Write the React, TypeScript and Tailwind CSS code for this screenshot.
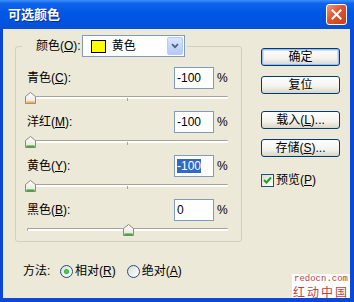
import React from "react";

const font = "font-['Liberation_Sans','Noto_Sans_CJK_SC',sans-serif]";

function Thumb({ tone = "green" }: { tone?: "green" | "orange" }) {
  const edge = tone === "green" ? "#21a121" : "#f4a63b";
  return (
    <svg width="11" height="12" viewBox="0 0 11 12">
      <defs>
        <linearGradient id={`tg-${tone}`} x1="0" y1="0" x2="0" y2="1">
          <stop offset="0" stopColor="#ffffff" />
          <stop offset="1" stopColor="#e6e4da" />
        </linearGradient>
      </defs>
      <path d="M0.5 4.5 L5.5 0.5 L10.5 4.5 V11.5 H0.5 Z" fill={`url(#tg-${tone})`} stroke="#8c8b80" />
      <path d="M1.5 10 H9.5 M1.5 10.8 H9.5" stroke={edge} strokeWidth="1" />
    </svg>
  );
}

function Slider({ value, tone }: { value: number; tone?: "green" | "orange" }) {
  const left = -2 + ((value + 100) / 200) * 196;
  return (
    <div className="relative h-[16px]">
      <div className="absolute left-0 right-0 top-[7px] h-[3px] rounded-[1px] border-t border-l border-[#a5a497] bg-white" />
      <div className="absolute left-[100px] top-[9px] h-[3px] w-px bg-[#a5a497]" />
      <div className="absolute top-[3px]" style={{ left }}>
        <Thumb tone={tone} />
      </div>
    </div>
  );
}

function Row({
  name,
  hot,
  value,
  selected,
}: {
  name: string;
  hot: string;
  value: string;
  selected?: boolean;
}) {
  return (
    <div className="flex h-[22px] items-center">
      <span className="leading-[14px]">
        {name}(<span className="underline">{hot}</span>):
      </span>
      <div className="ml-auto flex h-[22px] w-[40px] items-center border border-[#7f9db9] bg-white pl-[2px]">
        <span className={selected ? "bg-[#316ac5] leading-[14px] text-white" : "leading-[14px]"}>{value}</span>
      </div>
      <span className="ml-[3px] w-[11px] leading-[14px]">%</span>
    </div>
  );
}

function XpButton({ children, primary }: { children: React.ReactNode; primary?: boolean }) {
  return (
    <div
      className={`flex h-[18px] w-[79px] items-center justify-center rounded-[3px] border border-[#003c74] bg-[linear-gradient(180deg,#ffffff_0%,#f3f2ec_60%,#d8d4c6_100%)] leading-[14px] ${
        primary ? "shadow-[inset_0_0_0_1px_#9ebbf0,inset_0_0_0_2px_#cde0fb]" : ""
      }`}
    >
      {children}
    </div>
  );
}

function Radio({ on }: { on?: boolean }) {
  return (
    <div className="flex h-[13px] w-[13px] items-center justify-center rounded-full border border-[#1c5180] bg-[linear-gradient(135deg,#dcdcd6,#ffffff)]">
      {on && <div className="h-[5px] w-[5px] rounded-full bg-[radial-gradient(circle,#55d355,#21a121)]" />}
    </div>
  );
}

const rows = [
  { name: "青色", hot: "C", value: "-100", slider: -100, tone: "orange" as const },
  { name: "洋红", hot: "M", value: "-100", slider: -100 },
  { name: "黄色", hot: "Y", value: "-100", slider: -100, selected: true },
  { name: "黑色", hot: "B", value: "0", slider: 0 },
];

export default function App() {
  return (
    <div className={`relative flex h-[302px] w-[354px] flex-col overflow-hidden bg-[#0a48d8] text-[12px] text-black ${font}`}>
      <div className="flex h-[29px] items-center bg-[linear-gradient(180deg,#3d8ff6_0%,#0f62ea_12%,#0057e5_45%,#0053e0_80%,#0e4fcf_100%)] pl-[8px] pr-[7px]">
        <span className="text-[13px] font-bold text-white [text-shadow:1px_1px_0_#0a2e8c]">可选颜色</span>
        <div className="ml-auto flex h-[21px] w-[21px] items-center justify-center rounded-[3px] border border-white bg-[linear-gradient(135deg,#f09a7c_0%,#e0532e_45%,#c93f1c_100%)]">
          <svg width="11" height="11" viewBox="0 0 11 11">
            <path d="M1.5 1.5 L9.5 9.5 M9.5 1.5 L1.5 9.5" stroke="white" strokeWidth="2" strokeLinecap="square" />
          </svg>
        </div>
      </div>

      <div className="mb-[4px] ml-[3px] mr-[4px] flex flex-1 bg-[#ece9d8]">
        <div className="flex flex-col pl-[12px] pt-[6px]">
          <fieldset className="m-0 w-[227px] rounded-[3px] border border-[#d0d0bf] p-0">
            <legend className="ml-[6px] flex items-center pl-[14px] pr-[2px]">
              <span className="leading-[14px]">
                颜色(<span className="underline">O</span>):
              </span>
              <div className="ml-[1px] flex h-[22px] w-[103px] items-center border border-[#7f9db9] bg-white p-[1px] pl-[8px]">
                <div className="h-[13px] w-[15px] border border-black bg-[#ffff00]" />
                <span className="ml-[6px] leading-[14px]">黄色</span>
                <div className="ml-auto flex h-[18px] w-[16px] items-center justify-center rounded-[2px] border border-[#b8cbf3] bg-[linear-gradient(180deg,#d9e4fd,#b5c9f6)]">
                  <svg width="8" height="6" viewBox="0 0 8 6">
                    <path d="M1 1.2 L4 4.2 L7 1.2" stroke="#4d6185" strokeWidth="1.8" fill="none" />
                  </svg>
                </div>
              </div>
            </legend>
            <div className="flex flex-col gap-[6px] pb-[4px] pl-[11px] pr-[13px] pt-[10px]">
              {rows.map((r) => (
                <div key={r.hot}>
                  <Row name={r.name} hot={r.hot} value={r.value} selected={r.selected} />
                  <Slider value={r.slider} tone={r.tone} />
                </div>
              ))}
            </div>
          </fieldset>

          <div className="mt-[21px] flex h-[16px] items-center pl-[8px]">
            <span className="w-[37px] leading-[14px]">方法:</span>
            <Radio on />
            <span className="ml-[2px] leading-[14px]">
              相对(<span className="underline">R</span>)
            </span>
            <div className="ml-[11px]">
              <Radio />
            </div>
            <span className="ml-[2px] leading-[14px]">
              绝对(<span className="underline">A</span>)
            </span>
          </div>
        </div>

        <div className="ml-[19px] flex flex-col pt-[19px]">
          <XpButton primary>确定</XpButton>
          <div className="mt-[10px]">
            <XpButton>复位</XpButton>
          </div>
          <div className="mt-[17px]">
            <XpButton>
              载入(<span className="underline">L</span>)...
            </XpButton>
          </div>
          <div className="mt-[10px]">
            <XpButton>
              存储(<span className="underline">S</span>)...
            </XpButton>
          </div>
          <div className="mt-[16px] flex items-center">
            <div className="flex h-[13px] w-[13px] items-center justify-center border border-[#1c5180] bg-[linear-gradient(135deg,#dcdcd6,#ffffff)]">
              <svg width="9" height="9" viewBox="0 0 9 9">
                <path d="M1 4 L3.5 6.5 L8 1.5" stroke="#21a121" strokeWidth="2" fill="none" />
              </svg>
            </div>
            <span className="ml-[2px] leading-[14px]">
              预览(<span className="underline">P</span>)
            </span>
          </div>
        </div>
      </div>

      <div className="absolute left-[292px] top-[274px] flex h-[24px] w-[58px] flex-col items-center justify-between bg-white/90 text-[#b84444]">
        <span className="block h-[10px] font-['Liberation_Mono',monospace] text-[9px] leading-[10px]">redocn.com</span>
        <span className="block h-[13px] font-['Noto_Sans_CJK_SC',sans-serif] text-[12px] leading-[13px] tracking-[2px]">红动中国</span>
      </div>
    </div>
  );
}
